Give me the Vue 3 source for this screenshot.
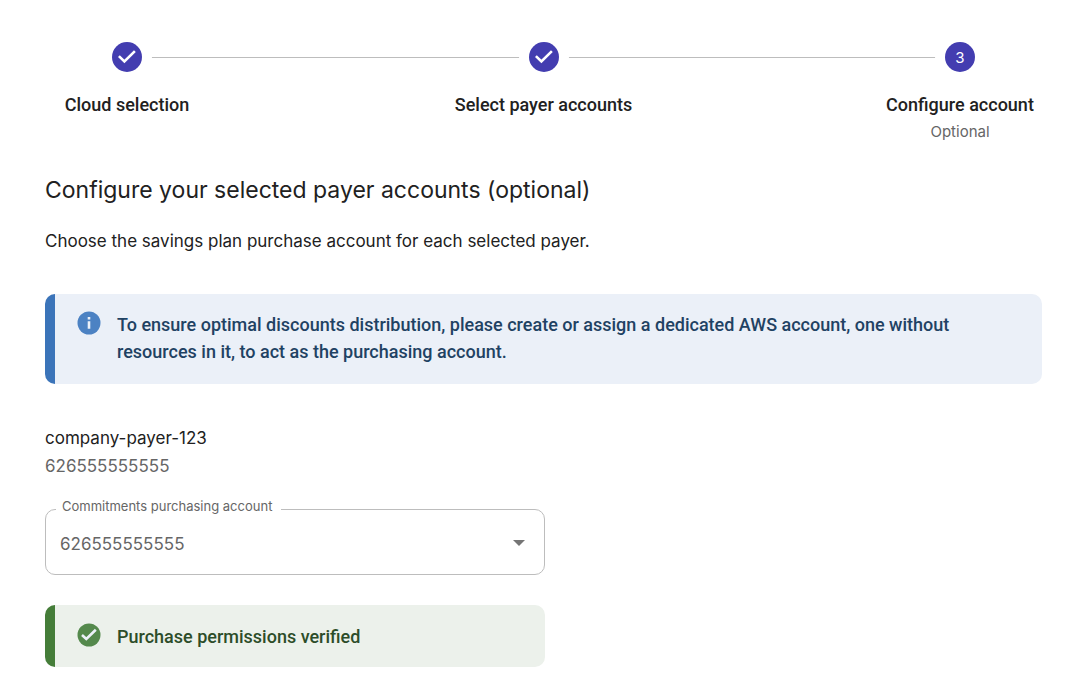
<script setup>
import { ref } from 'vue'
const steps = [
  { label: 'Cloud selection', done: true },
  { label: 'Select payer accounts', done: true },
  { label: 'Configure account', done: false, note: 'Optional' }
]
const account = ref('626555555555')
</script>

<template>
  <main class="page">
    <ol class="stepper">
      <li v-for="(step, i) in steps" :key="step.label" class="step">
        <span class="dot">
          <svg v-if="step.done" viewBox="0 0 30 30" aria-hidden="true"><path d="M6.9 14.1 12.4 19.4 22.9 9.1" /></svg>
          <template v-else>{{ i + 1 }}</template>
        </span>
        <span class="step-label">{{ step.label }}</span>
        <span v-if="step.note" class="step-note">{{ step.note }}</span>
      </li>
    </ol>

    <h1>Configure your selected payer accounts (optional)</h1>
    <p class="intro">Choose the savings plan purchase account for each selected payer.</p>

    <div class="alert info">
      <svg viewBox="0 0 24 24" aria-hidden="true">
        <circle cx="12" cy="12" r="11.5" />
        <path d="M12 10.2v7.6M12 6v2.6" />
      </svg>
      <p>To ensure optimal discounts distribution, please create or assign a dedicated AWS account, one without resources in it, to act as the purchasing account.</p>
    </div>

    <section class="payer">
      <h2>company-payer-123</h2>
      <p class="payer-id">626555555555</p>
      <div class="field">
        <label for="account">Commitments purchasing account</label>
        <select id="account" v-model="account">
          <option>626555555555</option>
        </select>
        <svg viewBox="0 0 12 6" aria-hidden="true"><path d="M0 0h12L6 6z" /></svg>
      </div>
      <div class="alert success">
        <svg viewBox="0 0 24 24" aria-hidden="true">
          <circle cx="12" cy="12" r="11.5" />
          <path d="M5 12 9.3 16 18.8 6.8" />
        </svg>
        <p>Purchase permissions verified</p>
      </div>
    </section>
  </main>
</template>

<style>
body { margin: 0; background: #fff; }
</style>

<style scoped>
.page { padding: 42px 45px 27px; font-family: Inter, sans-serif; color: #212121; }
h1, h2, p { margin: 0; font-weight: 400; }
.stepper { position: relative; display: flex; justify-content: space-between; list-style: none; margin: 0; padding: 0; }
.stepper::before { content: ''; position: absolute; top: 15px; left: 82px; right: 82px; height: 1px; background: #bdbdbd; }
.step { min-width: 164px; display: flex; flex-direction: column; align-items: center; text-align: center; }
.dot { position: relative; display: flex; align-items: center; justify-content: center; width: 30px; height: 30px; border-radius: 50%; background: #433db0; box-shadow: 0 0 0 10px #fff; color: #fff; font-size: 15px; }
.dot svg { width: 30px; fill: none; stroke: #fff; stroke-width: 2.6; }
.step-label { margin-top: 20px; font: 500 18px/26px Roboto, sans-serif; }
.step-note { font-size: 15px; line-height: 27px; color: #666; }
h1 { margin-top: 29px; font-size: 23px; line-height: 32px; }
.intro { margin-top: 22px; font-size: 17px; line-height: 26px; }
.alert { display: flex; box-sizing: border-box; border-radius: 10px; border-left: 10px solid; }
.alert svg { flex: none; width: 24px; height: 24px; fill: currentColor; }
.alert svg path { fill: none; stroke: #ecf1f9; stroke-width: 2.6; }
.alert p { font: 500 18px/27px Roboto, sans-serif; }
.info { margin-top: 40px; padding: 17px 60px 19px 22px; gap: 16px; background: #ebf0f8; border-color: #3b74b9; color: #4c82c3; }
.info p { color: #1f4263; }
.payer { width: 500px; max-width: 100%; margin-top: 40px; }
.payer h2, .payer-id { font-size: 17px; line-height: 28px; }
.payer-id { color: #666; }
.field { position: relative; margin-top: 29px; }
.field label { position: absolute; left: 11px; top: -13px; padding: 0 9px 0 6px; background: #fff; color: #666; font-size: 13px; line-height: 20px; }
.field select { display: block; appearance: none; box-sizing: border-box; width: 100%; height: 66px; padding: 4px 40px 0 14px; border: 1px solid #bdbdbd; border-radius: 10px; background: #fff; color: #666; font: 17px Inter, sans-serif; }
.field svg { position: absolute; right: 20px; top: 31px; width: 12px; fill: #757575; pointer-events: none; }
.success { margin-top: 30px; padding: 18px 22px 17px; gap: 16px; background: #ecf1eb; border-color: #457d39; color: #54894c; }
.success p { color: #2c4d29; }
</style>
